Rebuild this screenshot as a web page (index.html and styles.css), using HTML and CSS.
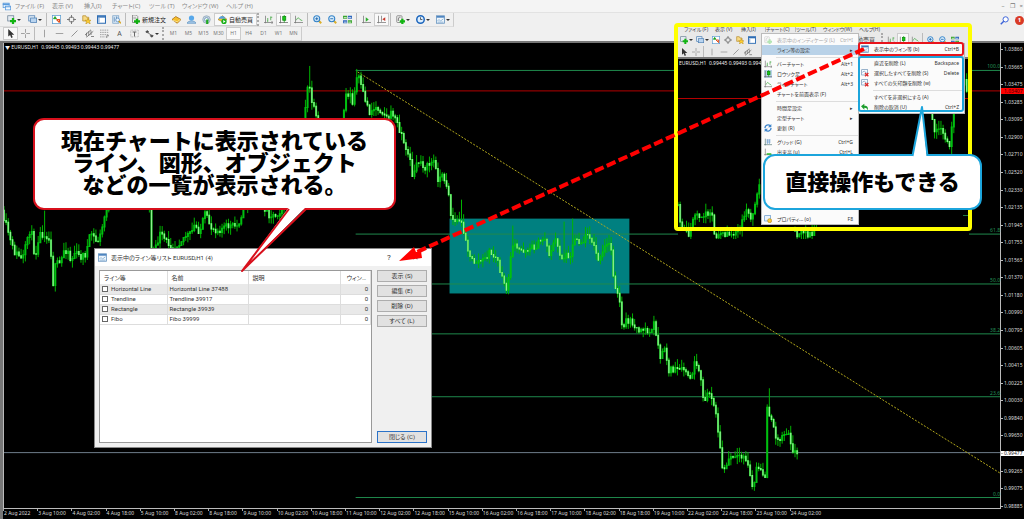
FILE: index.html
```html
<!DOCTYPE html>
<html lang="ja">
<head>
<meta charset="utf-8">
<title>EURUSD,H1</title>
<link rel="stylesheet" href="styles.css">
</head>
<body>
<svg class="defs" aria-hidden="true">
  <symbol id="i-app" viewBox="0 0 12 12"><rect x="1.5" y="1.5" width="8" height="6" fill="#dcecfb" stroke="#5b9bdc"/><path d="M1 3h9" stroke="#5b9bdc" stroke-width="2"/><rect x="4.5" y="5.5" width="7" height="5" fill="#f2f8fe" stroke="#5b9bdc"/><path d="M4 6.500h8" stroke="#5b9bdc"/></symbol>
  <symbol id="i-new" viewBox="0 0 12 12"><rect x="1" y="1" width="8" height="7" fill="#e4eaf0" stroke="#6a8094"/><path d="M8 4v8M4 8h8" stroke="#12b412" stroke-width="3"/></symbol>
  <symbol id="i-prof" viewBox="0 0 12 12"><rect x="1" y="1" width="8" height="7" fill="#dfeaf5" stroke="#4d7fb3"/><rect x="3.500" y="4" width="8" height="6" fill="#b9d4ef" stroke="#4d7fb3"/></symbol>
  <symbol id="i-mw" viewBox="0 0 12 12"><rect x=".5" y=".5" width="11" height="11" fill="#fff" stroke="#5d9ed1"/><path d="M2 5l2-3 2 3z" fill="#18a018" stroke="#18a018"/><path d="M6 6h4v4M6 6l4 4" stroke="#e05020" stroke-width="1.500" fill="none"/></symbol>
  <symbol id="i-nav" viewBox="0 0 12 12"><circle cx="6" cy="6" r="3.500" fill="none" stroke="#777" stroke-width="1.300"/><path d="M6 0v4M6 8v4M0 6h4M8 6h4" stroke="#777" stroke-width="1.300"/></symbol>
  <symbol id="i-fav" viewBox="0 0 12 12"><path d="M1 1h4l1 2h3v5H1z" fill="#f7d983" stroke="#b58d2c"/><path d="M8 4l1 3h3l-2 2 1 3-3-2-3 2 1-3-2-2h3z" fill="#ffcf33" stroke="#b88a12" stroke-width=".7"/></symbol>
  <symbol id="i-term" viewBox="0 0 12 12"><rect x=".7" y="1" width="10.600" height="10" fill="#fff" stroke="#2e6db4" stroke-width="1.400"/><path d="M1 2.500h10" stroke="#2e6db4" stroke-width="2"/><path d="M2.500 4v6" stroke="#9bbbe0" stroke-width="2"/></symbol>
  <symbol id="i-test" viewBox="0 0 12 12"><rect x="1" y="1" width="8" height="10" fill="#d6e6f5" stroke="#7ba3c9"/><path d="M3 3v6M6 2v6" stroke="#5681ac"/><circle cx="7.500" cy="6.500" r="2.500" fill="#eef7ff" stroke="#4d86bd"/><path d="M9 8l3 3" stroke="#d8a21a" stroke-width="2"/></symbol>
  <symbol id="i-order" viewBox="0 0 12 12"><path d="M2 0h5l2 2v8H2z" fill="#f5f5f5" stroke="#777"/><path d="M3 3h4M3 5h4" stroke="#999"/><path d="M8 5v7M4 8.500h8" stroke="#10b010" stroke-width="3"/></symbol>
  <symbol id="i-gold" viewBox="0 0 12 12"><path d="M0 6l5-4 7 4-5 5z" fill="#f5bd2c" stroke="#a66b12"/><path d="M1 7l6 2 4-3" stroke="#fff0a8" fill="none"/></symbol>
  <symbol id="i-user" viewBox="0 0 12 12"><circle cx="6" cy="4" r="3.500" fill="#58a8ea"/><path d="M0 11c1-4 11-4 12 0z" fill="#a9cbe9" stroke="#5f94c2"/></symbol>
  <symbol id="i-signal" viewBox="0 0 12 12"><circle cx="6" cy="6" r="5" fill="#c5d3df" stroke="#8fa7bb"/><circle cx="6" cy="6" r="2.500" fill="#fff" stroke="#5c8db5"/><path d="M7 6v6" stroke="#22a822" stroke-width="3"/></symbol>
  <symbol id="i-auto" viewBox="0 0 12 12"><path d="M0 6l6-5 6 5-6 3z" fill="#f4c63c" stroke="#b18a24"/><path d="M1 5c1-5 8-5 9 0z" fill="#5a9fdb"/><circle cx="8" cy="8.500" r="3.500" fill="#17b017"/><path d="M7 6.500l3 2-3 2z" fill="#fff"/></symbol>
  <symbol id="i-bars" viewBox="0 0 12 12"><path d="M2 1v10M0 10h12M10 8l2 2-2 2" stroke="#777" fill="none"/><path d="M5 4v5M5 8H4M9 2v5M9 3h2" stroke="#37a237"/></symbol>
  <symbol id="i-candle" viewBox="0 0 12 12"><path d="M2 1v10M0 10h12" stroke="#666"/><path d="M7 0v10" stroke="#0a9c0a"/><rect x="5" y="2" width="4" height="5" fill="#17c817" stroke="#0a8a0a"/></symbol>
  <symbol id="i-line" viewBox="0 0 12 12"><path d="M2 1v10M0 10h12" stroke="#777"/><path d="M3 7c2-4 3-4 4-2s3 1 4 3" stroke="#32a332" fill="none"/></symbol>
  <symbol id="i-zin" viewBox="0 0 12 12"><path d="M7 7l4 4" stroke="#ddb02a" stroke-width="2.500"/><circle cx="5" cy="5" r="4" fill="#dceffc" stroke="#3282c8" stroke-width="1.400"/><path d="M3 5h4M5 3v4" stroke="#1c65ad" stroke-width="1.200"/></symbol>
  <symbol id="i-zout" viewBox="0 0 12 12"><path d="M7 7l4 4" stroke="#ddb02a" stroke-width="2.500"/><circle cx="5" cy="5" r="4" fill="#dceffc" stroke="#3282c8" stroke-width="1.400"/><path d="M3 5h4" stroke="#1c65ad" stroke-width="1.200"/></symbol>
  <symbol id="i-tile" viewBox="0 0 12 12"><path d="M0 1h5.500v4H0zM6.500 7H12v4H6.500z" fill="#3aa52f"/><path d="M6.500 1H12v4H6.500zM0 7h5.500v4H0z" fill="#2e67bd"/><path d="M1 3.500h4M7 3.500h4M1 9.500h4M7 9.500h4" stroke="#fff"/></symbol>
  <symbol id="i-scroll" viewBox="0 0 12 12"><path d="M2 1v10M0 10h12" stroke="#777"/><path d="M5 3l4 3-4 3z" fill="#2fae2f"/></symbol>
  <symbol id="i-shift" viewBox="0 0 12 12"><path d="M2 1v10M0 10h12M6 1v8" stroke="#777"/><path d="M11 3L7 5.500 11 8z" fill="#c83a2c"/></symbol>
  <symbol id="i-ind" viewBox="0 0 12 12"><rect x="1" y="1" width="7" height="9" rx="1" fill="#f2f2f2" stroke="#777"/><path d="M3 8c0-5 2-6 3-5" stroke="#555" fill="none"/><path d="M8.500 5v7M5 8.500h7" stroke="#10b510" stroke-width="3"/></symbol>
  <symbol id="i-clock" viewBox="0 0 12 12"><circle cx="6" cy="6" r="5" fill="#dceefe" stroke="#1c66bd" stroke-width="2"/><path d="M6 3v3h2.500" stroke="#333" fill="none"/></symbol>
  <symbol id="i-tmpl" viewBox="0 0 12 12"><rect x=".7" y="1" width="10.600" height="10" fill="#eef6fd" stroke="#5e8fbd"/><path d="M1 2.500h10" stroke="#3a76b8" stroke-width="2"/><path d="M2 8l2-2 2 2 4-3M2 9.500h8" stroke="#7ba6cb" fill="none"/></symbol>
  <symbol id="i-cur" viewBox="0 0 12 12"><path d="M3 0v10l2.500-2 1.500 4 2-1-1.500-3.500H11z" fill="#333"/></symbol>
  <symbol id="i-cross" viewBox="0 0 12 12"><path d="M6 0v5M6 7v5M0 6h5M7 6h5" stroke="#888"/></symbol>
  <symbol id="i-v" viewBox="0 0 12 12"><path d="M6 1v10" stroke="#888"/></symbol>
  <symbol id="i-h" viewBox="0 0 12 12"><path d="M1 6h10" stroke="#888"/></symbol>
  <symbol id="i-d" viewBox="0 0 12 12"><path d="M2 10l8-8" stroke="#888" stroke-width="1.200"/></symbol>
  <symbol id="i-ch" viewBox="0 0 12 12"><path d="M0 8l8-7M2 11l9-8M2 5v5M5 3v6M8 2v6M8 10h4" stroke="#666"/></symbol>
  <symbol id="i-fib" viewBox="0 0 12 12"><path d="M0 1.500h12M0 4.500h12M0 7.500h12M0 10.500h7" stroke="#888" stroke-dasharray="2 1"/><path d="M9 12V9h3" stroke="#666" fill="none"/></symbol>
  <symbol id="i-label" viewBox="0 0 12 12"><rect x="1" y="1.500" width="10" height="9" fill="none" stroke="#999" stroke-dasharray="1 1"/><path d="M3.500 4h5M6 4v6" stroke="#666" stroke-width="1.300"/></symbol>
  <symbol id="i-arr" viewBox="0 0 12 12"><path d="M1 4l2-2 2 2-2 1zM7 9l2-1 2 1-2 2zM4 5l4 3" fill="#444" stroke="#444"/></symbol>
  <symbol id="i-search" viewBox="0 0 12 12"><circle cx="7.500" cy="4.500" r="3.500" fill="#fff" stroke="#3a62d8" stroke-width="1.300"/><path d="M5 7l-4 4" stroke="#3a62d8" stroke-width="2"/></symbol>
  <symbol id="i-grid" viewBox="0 0 12 12"><path d="M2 1v10M0 10h12" stroke="#577"/><path d="M4 3h6M4 6h6M5 2v7M8 2v7" stroke="#5b93c9"/></symbol>
  <symbol id="i-vol" viewBox="0 0 12 12"><path d="M2 1v10M0 10h12" stroke="#777"/><path d="M4 9h7" stroke="#16b516" stroke-width="2"/></symbol>
  <symbol id="i-ref" viewBox="0 0 12 12"><path d="M1.500 6a4.500 4.500 0 0 1 8-3M10.500 6a4.500 4.500 0 0 1-8 3" stroke="#3c84cc" stroke-width="2" fill="none"/><path d="M11 0v5H6zM1 12V7h5z" fill="#3c84cc"/></symbol>
  <symbol id="i-prop" viewBox="0 0 12 12"><rect x="1" y="1" width="9" height="8" fill="#eaf3fc" stroke="#5c93c8"/><circle cx="8.500" cy="8.500" r="3" fill="#ffce3a" stroke="#b58a1c"/></symbol>
  <symbol id="i-del" viewBox="0 0 12 12"><rect x="1" y="1" width="9" height="8" fill="#f6faff" stroke="#6b90b5"/><path d="M2 5l3-2 3 3" stroke="#6b90b5" fill="none"/><path d="M6 6l5 5M11 6l-5 5" stroke="#e02b2b" stroke-width="2"/></symbol>
  <symbol id="i-undo" viewBox="0 0 12 12"><path d="M0 5l5-4v3c5 0 6 3 5 7-1-3-2-4-5-4v3z" fill="#1d9e2d"/></symbol>
</svg>

<div class="desk">
  <header class="head">
    <nav class="menubar">
      <svg class="ic"><use href="#i-app"/></svg>
      <button class="mi w37">ファイル (F)</button><button class="mi w32">表示 (V)</button><button class="mi w28">挿入(I)</button><button class="mi w37">チャート(C)</button><button class="mi w33">ツール (T)</button><button class="mi w44">ウィンドウ (W)</button><button class="mi">ヘルプ (H)</button>
      <span class="wctl"><button>–</button><button>❐</button><button>×</button></span>
    </nav>
    <div class="bar">
      <div class="group">
        <button class="tb dd first-dd"><svg class="ic"><use href="#i-new"/></svg></button><button class="tb dd"><svg class="ic"><use href="#i-prof"/></svg></button><i class="sep"></i><button class="tb"><svg class="ic"><use href="#i-mw"/></svg></button><button class="tb"><svg class="ic"><use href="#i-nav"/></svg></button><button class="tb"><svg class="ic"><use href="#i-fav"/></svg></button><button class="tb"><svg class="ic"><use href="#i-term"/></svg></button><button class="tb"><svg class="ic"><use href="#i-test"/></svg></button><i class="sep"></i>
        <button class="tb wide"><svg class="ic"><use href="#i-order"/></svg>新規注文</button><button class="tb"><svg class="ic"><use href="#i-gold"/></svg></button><button class="tb"><svg class="ic"><use href="#i-user"/></svg></button><button class="tb"><svg class="ic"><use href="#i-signal"/></svg></button><button class="tb wide on"><svg class="ic"><use href="#i-auto"/></svg>自動売買</button><i class="grip"></i>
        <button class="tb"><svg class="ic"><use href="#i-bars"/></svg></button><button class="tb on"><svg class="ic"><use href="#i-candle"/></svg></button><button class="tb"><svg class="ic"><use href="#i-line"/></svg></button><i class="sep"></i><button class="tb"><svg class="ic"><use href="#i-zin"/></svg></button><button class="tb"><svg class="ic"><use href="#i-zout"/></svg></button><button class="tb"><svg class="ic"><use href="#i-tile"/></svg></button><i class="sep"></i><button class="tb"><svg class="ic"><use href="#i-scroll"/></svg></button><button class="tb on"><svg class="ic"><use href="#i-shift"/></svg></button><i class="sep"></i><button class="tb dd"><svg class="ic"><use href="#i-ind"/></svg></button><button class="tb dd"><svg class="ic"><use href="#i-clock"/></svg></button><button class="tb dd"><svg class="ic"><use href="#i-tmpl"/></svg></button>
      </div>
      <span class="right"><svg class="ic"><use href="#i-search"/></svg><b class="badge">1</b></span>
    </div>
    <div class="bar">
      <div class="group">
        <button class="tb on"><svg class="ic"><use href="#i-cur"/></svg></button><button class="tb"><svg class="ic"><use href="#i-cross"/></svg></button><i class="sep"></i><button class="tb"><svg class="ic"><use href="#i-v"/></svg></button><button class="tb"><svg class="ic"><use href="#i-h"/></svg></button><button class="tb"><svg class="ic"><use href="#i-d"/></svg></button><button class="tb"><svg class="ic"><use href="#i-ch"/></svg></button><button class="tb"><svg class="ic"><use href="#i-fib"/></svg></button><button class="tb letter">A</button><button class="tb"><svg class="ic"><use href="#i-label"/></svg></button><button class="tb dd"><svg class="ic"><use href="#i-arr"/></svg></button><i class="grip"></i>
        <button class="tb tf">M1</button><button class="tb tf">M5</button><button class="tb tf">M15</button><button class="tb tf">M30</button><button class="tb tf on">H1</button><button class="tb tf">H4</button><button class="tb tf">D1</button><button class="tb tf">W1</button><button class="tb tf">MN</button>
      </div>
    </div>
  </header>

  <main class="chart">
    <div class="plot">
      <svg class="fill" viewBox="4 43 997 466" preserveAspectRatio="none">
        <path d="M4 91h997" stroke="#b40000"/>
        <path d="M4 453.500h997" stroke="#6f7d8c"/>
        <rect x="450" y="219" width="180" height="75" fill="#008080"/>
        <path d="M356 70.500h645M356 234.500h645M356 284.500h645M356 334.500h645M356 397.500h645M356 498.500h645" stroke="#1f8a4c"/>
        <path d="M358 72L1001 474" stroke="#b5aa1c" stroke-dasharray="2 1.500"/>
        <g id="candles"></g>
      </svg>
      <p class="quote">▼ EURUSD,H1&nbsp; 0.99445 0.99493 0.99443 0.99477</p>
      <span class="fibo l100">100.0</span><span class="fibo l61">61.8</span><span class="fibo l50">50.0</span><span class="fibo l38">38.2</span><span class="fibo l23">23.6</span><span class="fibo l0">0.0</span>
    </div>
    <div class="prices">
      <span>1.03860</span><span>1.03665</span><span>1.03475</span><span>1.03285</span><span>1.03095</span><span>1.02900</span><span>1.02710</span><span>1.02520</span><span>1.02330</span><span>1.02135</span><span>1.01945</span><span>1.01755</span><span>1.01565</span><span>1.01370</span><span>1.01180</span><span>1.00990</span><span>1.00795</span><span>1.00605</span><span>1.00415</span><span>1.00225</span><span>1.00030</span><span>0.99840</span><span>0.99650</span><span class="now">0.99477</span><span>0.99265</span><span>0.99075</span><span>0.98885</span>
      <b class="tag">1.03407</b>
    </div>
    <div class="times">
      <span>2 Aug 2022</span><span>3 Aug 10:00</span><span>4 Aug 02:00</span><span>4 Aug 18:00</span><span>5 Aug 10:00</span><span>8 Aug 02:00</span><span>8 Aug 18:00</span><span>9 Aug 10:00</span><span>10 Aug 02:00</span><span>10 Aug 18:00</span><span>11 Aug 10:00</span><span>12 Aug 02:00</span><span>12 Aug 18:00</span><span>15 Aug 10:00</span><span>16 Aug 02:00</span><span>16 Aug 18:00</span><span>17 Aug 10:00</span><span>18 Aug 02:00</span><span>18 Aug 18:00</span><span>19 Aug 10:00</span><span>22 Aug 02:00</span><span>22 Aug 18:00</span><span>23 Aug 10:00</span><span>24 Aug 02:00</span>
    </div>
  </main>

  <section class="dialog">
    <div class="title"><svg class="ic"><use href="#i-tmpl"/></svg><h2>表示中のライン等リスト EURUSD,H1 (4)</h2><button>?</button><button>✕</button></div>
    <div class="dbody">
      <div class="list">
        <table>
          <colgroup><col class="c1"><col class="c2"><col class="c3"><col class="c4"></colgroup>
          <thead><tr><th>ライン等</th><th>名前</th><th>説明</th><th class="num">ウィン…</th></tr></thead>
          <tbody>
            <tr><td><label><input type="checkbox">Horizontal Line</label></td><td>Horizontal Line 37488</td><td></td><td class="num">0</td></tr>
            <tr><td><label><input type="checkbox">Trendline</label></td><td>Trendline 39917</td><td></td><td class="num">0</td></tr>
            <tr><td><label><input type="checkbox">Rectangle</label></td><td>Rectangle 39939</td><td></td><td class="num">0</td></tr>
            <tr><td><label><input type="checkbox">Fibo</label></td><td>Fibo 39999</td><td></td><td class="num">0</td></tr>
          </tbody>
        </table>
      </div>
      <div class="actions"><button>表示 (S)</button><button>編集 (E)</button><button>削除 (D)</button><button>すべて (L)</button><button class="close">閉じる (C)</button></div>
    </div>
  </section>

  <section class="inset">
    <div class="imenu"><span class="w31">ファイル (F)</span><span class="w26">表示 (V)</span><span class="w24">挿入(I)</span><span class="open">チャート(C)</span><span class="w27">ツール(T)</span><span class="w36">ウィンドウ(W)</span><span>ヘルプ(H)</span></div>
    <div class="ibar">
      <button class="tb dd"><svg class="ic"><use href="#i-new"/></svg></button><button class="tb dd"><svg class="ic"><use href="#i-prof"/></svg></button><button class="tb"><svg class="ic"><use href="#i-mw"/></svg></button><button class="tb"><svg class="ic"><use href="#i-nav"/></svg></button><button class="tb"><svg class="ic"><use href="#i-fav"/></svg></button><button class="tb"><svg class="ic"><use href="#i-term"/></svg></button>
      <span class="iright"><span class="auto">動売買</span><i class="grip"></i><button class="tb"><svg class="ic"><use href="#i-bars"/></svg></button><button class="tb on"><svg class="ic"><use href="#i-candle"/></svg></button><button class="tb"><svg class="ic"><use href="#i-line"/></svg></button><i class="sep"></i><button class="tb"><svg class="ic"><use href="#i-zin"/></svg></button><button class="tb"><svg class="ic"><use href="#i-zout"/></svg></button><button class="tb"><svg class="ic"><use href="#i-tile"/></svg></button></span>
    </div>
    <div class="ibar low">
      <button class="tb"><svg class="ic"><use href="#i-cur"/></svg></button><button class="tb"><svg class="ic"><use href="#i-cross"/></svg></button><i class="sep"></i><button class="tb"><svg class="ic"><use href="#i-v"/></svg></button><button class="tb"><svg class="ic"><use href="#i-h"/></svg></button><button class="tb"><svg class="ic"><use href="#i-d"/></svg></button><button class="tb"><svg class="ic"><use href="#i-ch"/></svg></button>
    </div>
    <div class="iplot">
      <svg class="fill" viewBox="678 59 291 181" preserveAspectRatio="none">
        <path d="M678 98.500h291" stroke="#b40000"/><path d="M963 215.500h5" stroke="#1f7a45"/>
        <g id="insetCandles"></g>
      </svg>
      <p class="quote">EURUSD,H1&nbsp; 0.99445 0.99493 0.99443</p>
    </div>
  </section>
  <div class="frame"></div>

  <ul class="menu main">
    <li class="off"><svg class="ic"><use href="#i-ind"/></svg>表示中のインディケータ (L)<kbd>Ctrl+I</kbd></li>
    <li class="sel">ライン等の設定<kbd>▸</kbd></li>
    <li class="rule"></li>
    <li><svg class="ic"><use href="#i-bars"/></svg>バーチャート<kbd>Alt+1</kbd></li>
    <li><svg class="ic box"><use href="#i-candle"/></svg>ロウソク足<kbd>Alt+2</kbd></li>
    <li><svg class="ic"><use href="#i-line"/></svg>ラインチャート<kbd>Alt+3</kbd></li>
    <li>チャートを前面表示 (F)</li>
    <li class="rule"></li>
    <li>時間足設定<kbd>▸</kbd></li>
    <li>定型チャート<kbd>▸</kbd></li>
    <li><svg class="ic"><use href="#i-ref"/></svg>更新 (R)</li>
    <li class="rule"></li>
    <li><svg class="ic"><use href="#i-grid"/></svg>グリッド (G)<kbd>Ctrl+G</kbd></li>
    <li><svg class="ic"><use href="#i-vol"/></svg>出来高 (u)<kbd>Ctrl+L</kbd></li>
    <li class="last"><svg class="ic"><use href="#i-prop"/></svg>プロパティ... (o)<kbd>F8</kbd></li>
  </ul>
  <ul class="menu sub">
    <li><svg class="ic"><use href="#i-tmpl"/></svg>表示中のライン等 (b)<kbd>Ctrl+B</kbd></li>
    <li class="rule"></li>
    <li>直近を削除 (L)<kbd>Backspace</kbd></li>
    <li><svg class="ic"><use href="#i-del"/></svg>選択したすべてを削除 (S)<kbd>Delete</kbd></li>
    <li><svg class="ic"><use href="#i-del"/></svg>すべての矢印類を削除 (w)</li>
    <li class="rule"></li>
    <li>すべてを非選択にする (A)</li>
    <li><svg class="ic"><use href="#i-undo"/></svg>削除の取消 (U)<kbd>Ctrl+Z</kbd></li>
  </ul>
  <div class="mark redmark"></div>
  <div class="mark bluemark"></div>

  <p class="callout first">現在チャートに表示されている<br>ライン、図形、オブジェクト<br>などの一覧が表示される。</p>
  <p class="callout second">直接操作もできる</p>
  <svg class="notes" width="1024" height="519" viewBox="0 0 1024 519">
    <path d="M289 207L242 271L306 207z" fill="#fff"/>
    <path d="M289 209L242 271L306 209" fill="none" stroke="#d8101c" stroke-width="2" stroke-linejoin="round"/>
    <path d="M912 158L922 107L927 158z" fill="#fff"/>
    <path d="M912.500 156L922 107L927.500 156" fill="none" stroke="#1ca5dc" stroke-width="2" stroke-linejoin="round"/>
    <path d="M864 49L417 252" stroke="#f00" stroke-width="4" stroke-dasharray="9.500 3.500" fill="none"/>
    <path d="M399 261L414 247L416 252L421 251L422 258z" fill="#f00"/>
  </svg>
</div>
<script src="chart.js"></script>
</body>
</html>
```
FILE: styles.css
```css
* { box-sizing: border-box; }
body { margin: 0; background: #000; font: 6px/1 "Noto Sans", "Noto Sans CJK JP", sans-serif; color: #222; font-feature-settings: "palt"; }
button { font: inherit; color: inherit; background: none; border: 0; padding: 0; font-feature-settings: inherit; white-space: nowrap; }
p, ul, h2 { margin: 0; padding: 0; }
.defs { position: absolute; width: 0; height: 0; }
.desk { position: relative; min-height: 100vh; display: flex; flex-direction: column; overflow: hidden; }
.ic { width: 9px; height: 9px; flex: none; display: block; }

/* window header */
.head { background: #f0f0f0; border-bottom: 2px solid #777; }
.menubar { height: 13px; display: flex; align-items: center; padding-left: 2px; background: #f4f4f4; color: #8a8a8a; border-bottom: 1px solid #e2e2e2; }
.menubar .ic { margin-right: 4px; }
.mi { text-align: left; }
.w24 { width: 24px; } .w26 { width: 26px; } .w27 { width: 27px; } .w28 { width: 28px; } .w31 { width: 31px; } .w32 { width: 32px; } .w33 { width: 33px; } .w36 { width: 36px; } .w37 { width: 37px; } .w44 { width: 44px; }
.wctl { margin-left: auto; display: flex; gap: 5px; padding-right: 1px; color: #777; }
.bar { height: 14px; display: flex; align-items: stretch; justify-content: space-between; }
.group { display: flex; padding-left: 3px; border-right: 1px solid #ccc; border-bottom: 1px solid #ddd; }
.tb { width: 15px; display: flex; align-items: center; justify-content: center; }
.dd { width: 20px; gap: 1px; }
.first-dd { width: 22px; }
.dd::after { content: ""; border: 2px solid transparent; border-top-color: #333; border-bottom: 0; }
.wide { width: auto; gap: 2px; padding: 0 3px; }
.on { background: #f9f9f9; border: 1px solid #ccc; }
.sep { width: 3px; border-left: 1px solid #bbb; margin-left: 1px; }
.grip { width: 4px; border-left: 2px dotted #aaa; }
.tf { color: #777; font-size: 5px; }
.letter { color: #555; font-size: 7px; }
.right { display: flex; align-items: center; gap: 6px; }
.badge { width: 9px; height: 9px; border-radius: 5px; background: #d93a26; color: #fff; text-align: center; line-height: 9px; }

/* chart window */
.chart { flex: 1; display: grid; grid-template: 1fr 10px / 1fr 23px; color: #ddd; border-left: 3px solid #777; }
.plot { position: relative; border: solid #bbb; border-width: 0 1px 1px; }
.fill { position: absolute; inset: 0; width: 100%; height: 100%; }
.quote { position: absolute; left: 1px; top: 2px; font-size: 5px; color: #eee; white-space: nowrap; }
.fibo { position: absolute; right: 0; color: #25935a; font-size: 5px; }
.l100 { top: 4.6%; } .l61 { top: 39.8%; } .l50 { top: 50.6%; } .l38 { top: 61.3%; } .l23 { top: 74.8%; } .l0 { top: 96.5%; }
.prices { position: relative; display: flex; flex-direction: column; justify-content: space-between; padding-top: 4px; font-size: 5px; }
.prices span { display: flex; align-items: center; gap: 1px; height: 5px; }
.prices span::before { content: ""; width: 2px; border-top: 1px solid #bbb; }
.prices .now { background: #fff; color: #222; }
.tag { position: absolute; top: 9.6%; left: 0; right: 0; padding-left: 3px; font-weight: 400; line-height: 6px; background: #f00; color: #400; }
.times { grid-column: 1 / 3; display: grid; grid-auto-flow: column; grid-auto-columns: 3.35%; font-size: 5px; white-space: nowrap; }
.times span { border-left: 1px solid #aaa; height: 2px; padding-top: 2px; }

/* object list dialog */
.dialog { position: absolute; left: 94px; top: 248px; width: 338px; height: 200px; display: flex; flex-direction: column; background: #f0f0f0; border: 1px solid #888; color: #333; font-family: Roboto, "Noto Sans CJK JP", sans-serif; }
.title { height: 17px; display: flex; align-items: center; gap: 4px; padding: 0 10px 0 3px; background: #fff; }
.title h2 { font: inherit; margin-right: auto; }
.title button { width: 12px; font-size: 8px; margin-left: 10px; }
.dbody { flex: 1; display: flex; gap: 5px; padding: 4px; }
.list { flex: 1; background: #fff; border: 1px solid #999; }
table { width: 100%; table-layout: fixed; border-collapse: collapse; }
.c1 { width: 67px; } .c2 { width: 81px; } .c4 { width: 30px; }
th, td { padding: 0 2px; text-align: left; font-weight: 400; border-right: 1px solid #ddd; white-space: nowrap; }
th { height: 13px; padding: 0 4px; }
td { height: 10px; border-bottom: 1px solid #ddd; }
tbody tr:nth-child(odd) { background: #e9e9e9; }
.num { text-align: right; }
label { display: flex; align-items: center; gap: 3px; }
input { appearance: none; width: 6px; height: 6px; margin: 0; border: 1px solid #666; background: #fff; }
.actions { width: 50px; display: flex; flex-direction: column; gap: 3px; }
.actions button { height: 12px; background: #e1e1e1; border: 1px solid #adadad; }
.actions .close { margin-top: auto; border-color: #2a72c8; }

/* zoomed menu picture */
.inset { position: absolute; left: 678px; top: 26px; width: 291px; height: 214px; display: flex; flex-direction: column; background: #e9e9e9; color: #444; font-size: 5px; }
.imenu { display: flex; align-items: center; height: 7px; padding-left: 6px; white-space: nowrap; }
.imenu .open { width: 31px; border: 1px solid #bbb; border-width: 0 1px; }
.ibar { display: flex; height: 13px; }
.ibar .tb { width: 12px; }
.ibar .dd { width: 16px; }
.ibar .ic { width: 8px; height: 8px; }
.iright { margin-left: auto; display: flex; padding-right: 8px; }
.auto { align-self: center; padding-right: 6px; font-size: 6px; }
.ibar.low { height: 13px; border-bottom: 2px solid #777; }
.iplot { position: relative; flex: 1; background: #000; }
.iplot .quote { width: 82px; overflow: hidden; }
.frame { position: absolute; left: 674px; top: 23px; width: 298px; height: 208px; border: 4px solid #ff0; border-radius: 4px; }
.menu { position: absolute; list-style: none; display: flex; flex-direction: column; background: #fbfbfb; border: 1px solid #bbb; color: #333; white-space: nowrap; }
.menu li { position: relative; display: flex; align-items: center; height: 10px; padding: 0 5px 0 15px; font-size: 5px; }
.menu .ic { position: absolute; left: 2px; width: 8px; height: 8px; }
.menu .rule { height: 4px; margin-left: 14px; background: linear-gradient(#ddd, #ddd) center / 100% 1px no-repeat; }
.menu kbd { font: inherit; margin-left: auto; }
.menu .off { color: #aaa; }
.off .ic { opacity: .3; }
.menu .sel { background: #b9d2e8; }
.menu .box { background: #b9d2e8; }
.main { left: 761px; top: 33px; width: 98px; height: 192px; padding-top: 1px; }
.main .last { margin-top: auto; }
.sub { left: 858px; top: 43px; width: 107px; padding-bottom: 1px; }
.mark { position: absolute; left: 858px; width: 106px; border: 2px solid #e8141c; border-radius: 3px; }
.redmark { top: 42px; height: 14px; }
.bluemark { top: 56px; height: 56px; border-color: #1ca5dc; }

/* speech balloons */
.callout { position: absolute; display: flex; align-items: center; justify-content: center; text-align: center; background: #fff; border: 2px solid #d8101c; border-radius: 11px; color: #000; font: 900 22px/22px "Noto Sans CJK JP", sans-serif; font-feature-settings: normal; white-space: nowrap; }
.first { display: block; left: 33px; top: 118px; width: 363px; height: 92px; padding-top: 8px; }
.second { left: 763px; top: 154px; width: 219px; height: 56px; padding-bottom: 4px; border-color: #1ca5dc; border-radius: 12px; }
.notes { position: absolute; left: 0; top: 0; }
```
FILE: chart.js
```js
// Closing-price waypoints; the candles between them are filled in.
const price = [[4,210],[4,224],[7,226],[10,240],[14,252],[20,256],[22,262],[25,250],[29,230],[32,235],[35,259],[38,240],[40,234],[46,234],[49,240],[51,252],[53,285],[56,262],[59,265],[62,258],[64,250],[68,250],[71,262],[75,252],[80,257],[86,254],[91,232],[97,243],[101,234],[106,210],[112,190],[128,180],[149,205],[150,208],[151,250],[154,255],[160,234],[168,243],[175,247],[185,236],[191,234],[195,225],[200,232],[205,214],[212,228],[218,230],[228,226],[238,226],[243,210],[250,195],[263,205],[270,215],[276,215],[283,208],[290,190],[303,150],[304,110],[306,105],[309,80],[311,97],[314,108],[318,124],[325,150],[338,145],[343,120],[346,95],[350,92],[353,105],[358,72],[361,86],[366,100],[370,112],[376,107],[382,110],[388,118],[393,112],[397,122],[403,136],[407,155],[410,148],[412,181],[415,170],[420,160],[426,168],[434,160],[438,178],[444,176],[449,190],[450,213],[455,222],[460,220],[465,232],[470,258],[475,262],[485,260],[490,252],[498,260],[502,278],[508,290],[510,272],[512,243],[518,250],[524,250],[535,247],[546,237],[549,255],[556,240],[562,258],[572,253],[575,237],[583,243],[589,231],[594,246],[600,262],[605,248],[611,242],[614,275],[617,290],[621,307],[622,324],[625,330],[627,320],[636,325],[640,336],[644,328],[650,334],[655,323],[658,340],[661,362],[665,345],[669,370],[675,370],[680,371],[686,370],[691,381],[695,364],[700,374],[705,402],[710,393],[716,405],[718,430],[720,438],[722,466],[726,471],[730,458],[740,459],[746,457],[751,475],[754,494],[757,467],[763,475],[767,475],[768,408],[773,425],[779,442],[785,433],[790,432],[793,450],[799,455]];
const spikes = { 309: 66, 357: 69, 461: 200, 514: 226, 565: 222, 574: 219, 770: 389, 45: 211, 653: 437 };
const insetParts = [
  [[678,205],[680,218],[683,228],[690,234],[695,212],[700,220],[707,211],[712,216],[715,235],[723,233],[732,234],[740,230],[745,210],[752,217],[755,204],[758,188],[761,176]],
  [[795,228],[798,236],[803,232],[812,234],[817,228]],
  [[860,200],[863,206]],
  [[926,100],[930,108],[934,128],[940,130],[945,138],[950,146],[952,125],[953,105],[958,92],[964,80],[967,90],[969,84]]
];

let seed = 11;
function rnd() {
  seed = (seed * 16807) % 2147483647;
  return seed / 2147483647;
}

function draw(id, points) {
  const step = 2.14;
  let wick = "", up = "", down = "", prev = points[0][1], k = 0;
  for (let x = points[0][0]; x < points[points.length - 1][0]; x += step) {
    while (k < points.length - 2 && points[k + 1][0] < x) k++;
    const [ax, ay] = points[k], [bx, by] = points[k + 1];
    const t = bx === ax ? 1 : (x - ax) / (bx - ax);
    const y = ay + (by - ay) * t + (rnd() - 0.5) * 7;
    let top = Math.min(prev, y) - rnd() * 8;
    const low = Math.min(Math.max(prev, y) + rnd() * 8, id === "candles" ? 498 : 239);
    if (id === "candles") {
      for (const s in spikes) if (Math.abs(s - x) < 1.08) top = Math.min(top, spikes[s]);
    }
    wick += `M${x} ${top}V${low}`;
    const body = `M${x} ${Math.min(prev, y)}V${Math.max(prev, y) + 1}`;
    if (y > prev) down += body; else up += body;
    prev = y;
  }
  document.getElementById(id).innerHTML +=
    `<path d="${wick}" stroke="#00b400" stroke-width="1"/>` +
    `<path d="${up}" stroke="#00c010" stroke-width="2"/>` +
    `<path d="${down}" stroke="#00c010" stroke-width="2.1"/>` +
    `<path d="${down}" stroke="#90ee90" stroke-width="1.3"/>`;
}

draw("candles", price);
insetParts.forEach(part => draw("insetCandles", part));
```
